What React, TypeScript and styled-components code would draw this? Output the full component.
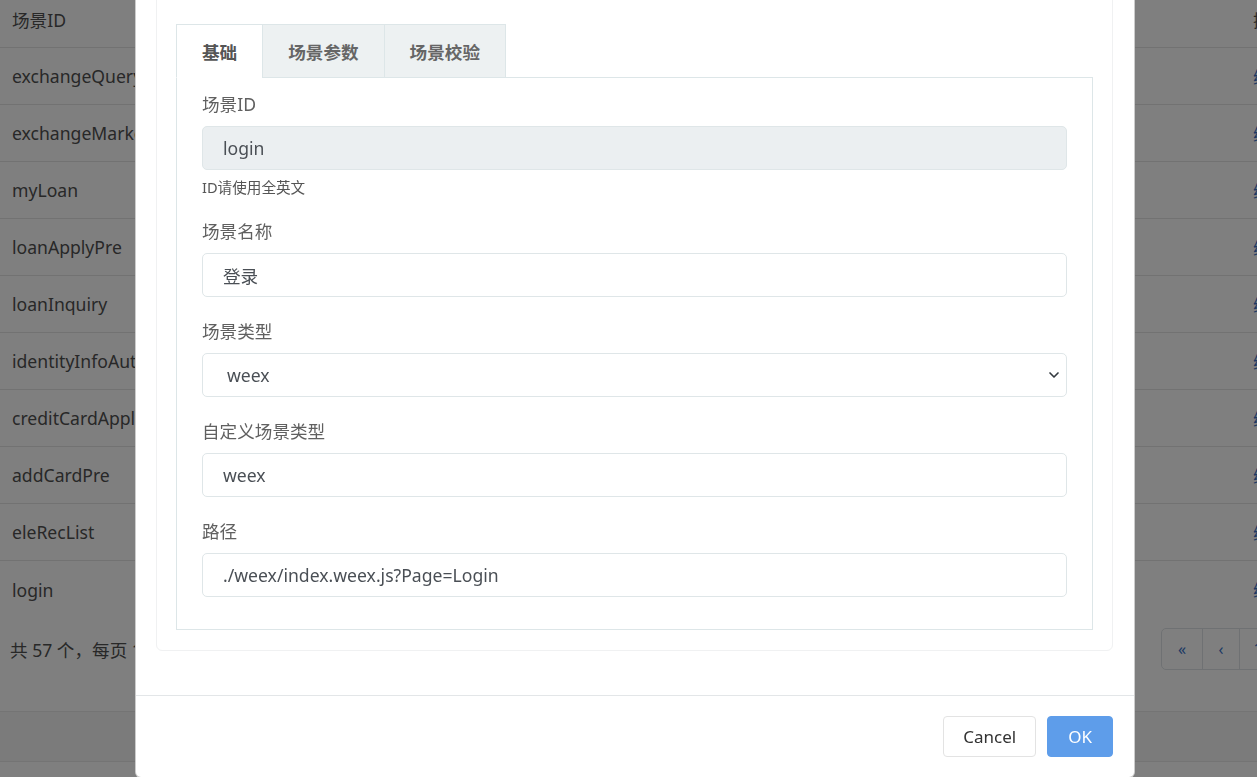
import { FC, ReactElement } from 'react'
import styled, { createGlobalStyle } from 'styled-components'
import { ChevronDown } from 'lucide-react'

const GlobalStyle = createGlobalStyle`
  html, body {
    margin: 0;
    padding: 0;
    overflow: hidden;
    background: #ffffff;
    font-family: 'Noto Sans', 'Noto Sans CJK SC', sans-serif;
    font-size: 17.6px;
  }
  * {
    box-sizing: border-box;
  }
`

const Page = styled('div')`
  position: relative;
  width: 1257px;
  height: 777px;
  overflow: hidden;
`

const Table = styled('div')`
  margin-top: -9px;
  width: 1320px;
`

const Row = styled('div')<{ $last?: boolean }>`
  display: grid;
  grid-template-columns: 1241px 1fr;
  align-items: center;
  height: 57px;
  border-bottom: ${({ $last }) => ($last ? 'none' : '1px solid #e4e4e4')};
  color: #505050;
`

const Cell = styled('div')`
  padding: 0 12px;
  white-space: nowrap;
`

const LinkCell = styled(Cell)`
  color: #3a72c8;
`

const PagerRow = styled('div')`
  display: flex;
  align-items: center;
  justify-content: space-between;
  margin-top: 10px;
  height: 42px;
  padding-left: 10px;
  color: #505050;
`

const Pager = styled('div')`
  display: flex;
  width: 96px;
  overflow: hidden;
`

const PageButton = styled('span')<{ $first?: boolean; $w: number }>`
  display: flex;
  align-items: center;
  justify-content: center;
  flex: 0 0 ${({ $w }) => $w}px;
  height: 42px;
  border: 1px solid #dee2e6;
  margin-left: ${({ $first }) => ($first ? '0' : '-1px')};
  border-radius: ${({ $first }) => ($first ? '5px 0 0 5px' : '0')};
  color: #3a72c8;
  font-size: 16px;
`

const FooterBar = styled('div')`
  margin-top: 41px;
  height: 51px;
  border-top: 1px solid #e8e8e8;
  border-bottom: 1px solid #e8e8e8;
  background: #f6f6f6;
`

const Overlay = styled('div')`
  position: fixed;
  inset: 0;
  background: rgba(0, 0, 0, 0.5);
`

const Modal = styled('div')`
  position: fixed;
  left: 135px;
  top: -38px;
  width: 1000px;
  background: #ffffff;
  border: 1px solid rgba(0, 0, 0, 0.2);
  border-radius: 6px;
`

const ModalBody = styled('div')`
  padding: 20px 21px 44px 20px;
`

const Card = styled('div')`
  border: 1px solid #f0f1f2;
  border-radius: 6px;
  padding: 40px 19px 20px 19px;
`

const TabNav = styled('div')`
  display: flex;
  align-items: flex-end;
`

const Tab = styled('div')<{ $active?: boolean }>`
  position: relative;
  z-index: 1;
  height: 54px;
  margin-bottom: -1px;
  margin-left: ${({ $active }) => ($active ? '0' : '-1px')};
  padding: 0 25px;
  display: flex;
  align-items: center;
  font-weight: 700;
  color: ${({ $active }) => ($active ? '#555555' : '#666666')};
  background: ${({ $active }) => ($active ? '#ffffff' : '#edf1f2')};
  border: 1px solid #dde6e8;
  border-bottom-color: ${({ $active }) => ($active ? '#ffffff' : '#dde6e8')};
  &:first-child {
    margin-left: 0;
  }
`

const Panel = styled('div')`
  border: 1px solid #dde6e8;
  padding: 14px 25px 32px 25px;
`

const Group = styled('div')<{ $gap: number }>`
  margin-bottom: ${({ $gap }) => $gap}px;
  &:last-child {
    margin-bottom: 0;
  }
`

const Label = styled('div')`
  height: 24px;
  line-height: 24px;
  margin-bottom: 10px;
  color: #606060;
`

const Input = styled('input')`
  display: block;
  width: 100%;
  height: 44px;
  padding: 0 20px;
  font: inherit;
  color: #4a4f55;
  background: #ffffff;
  border: 1px solid #dfe6e8;
  border-radius: 5px;
  outline: none;
  &:disabled {
    background: #ebeff1;
    color: #4a4f55;
  }
`

const SelectWrap = styled('div')`
  position: relative;
`

const Select = styled('select')`
  display: block;
  width: 100%;
  height: 44px;
  padding: 0 40px 0 24px;
  font: inherit;
  color: #4a4f55;
  background: #ffffff;
  border: 1px solid #dfe6e8;
  border-radius: 5px;
  appearance: none;
  outline: none;
`

const Arrow = styled(ChevronDown)`
  position: absolute;
  right: 5px;
  top: 14px;
  width: 16px;
  height: 16px;
  color: #343a40;
  pointer-events: none;
`

const Help = styled('div')`
  margin-top: 8px;
  height: 18px;
  line-height: 18px;
  font-size: 14.6px;
  color: #555555;
`

const ModalFooter = styled('div')`
  display: flex;
  justify-content: flex-end;
  gap: 11px;
  padding: 20px 21px 20px 20px;
  border-top: 1px solid #e3e6e8;
`

const Button = styled('button')<{ $primary?: boolean }>`
  height: 41px;
  padding: 0 ${({ $primary }) => ($primary ? '20px' : '19px')};
  font: inherit;
  font-size: 17px;
  border-radius: 4px;
  color: ${({ $primary }) => ($primary ? '#ffffff' : '#333333')};
  background: ${({ $primary }) => ($primary ? '#5e9dea' : '#ffffff')};
  border: 1px solid ${({ $primary }) => ($primary ? '#5e9dea' : '#e3e3e3')};
`

const rows = [
  'exchangeQuery',
  'exchangeMarket',
  'myLoan',
  'loanApplyPre',
  'loanInquiry',
  'identityInfoAuth',
  'creditCardApply',
  'addCardPre',
  'eleRecList',
  'login',
]

const App: FC = (): ReactElement => {
  return (
    <Page>
      <GlobalStyle />
      <Table>
        <Row>
          <Cell>场景ID</Cell>
          <Cell>操作</Cell>
        </Row>
        {rows.map((name, i) => (
          <Row key={name} $last={i === rows.length - 1}>
            <Cell>{name}</Cell>
            <LinkCell>编辑</LinkCell>
          </Row>
        ))}
      </Table>
      <PagerRow>
        <span>共 57 个，每页 10 个</span>
        <Pager>
          <PageButton $first $w={42}>«</PageButton>
          <PageButton $w={38}>‹</PageButton>
          <PageButton $w={38}>1</PageButton>
        </Pager>
      </PagerRow>
      <FooterBar />
      <Overlay />
      <Modal>
        <ModalBody>
          <Card>
            <TabNav>
              <Tab $active>基础</Tab>
              <Tab>场景参数</Tab>
              <Tab>场景校验</Tab>
            </TabNav>
            <Panel>
              <Group $gap={23}>
                <Label>场景ID</Label>
                <Input disabled defaultValue="login" />
                <Help>ID请使用全英文</Help>
              </Group>
              <Group $gap={22}>
                <Label>场景名称</Label>
                <Input defaultValue="登录" />
              </Group>
              <Group $gap={22}>
                <Label>场景类型</Label>
                <SelectWrap>
                  <Select defaultValue="weex">
                    <option value="weex">weex</option>
                    <option value="h5">h5</option>
                  </Select>
                  <Arrow strokeWidth={2.5} />
                </SelectWrap>
              </Group>
              <Group $gap={22}>
                <Label>自定义场景类型</Label>
                <Input defaultValue="weex" />
              </Group>
              <Group $gap={22}>
                <Label>路径</Label>
                <Input defaultValue="./weex/index.weex.js?Page=Login" />
              </Group>
            </Panel>
          </Card>
        </ModalBody>
        <ModalFooter>
          <Button>Cancel</Button>
          <Button $primary>OK</Button>
        </ModalFooter>
      </Modal>
    </Page>
  )
}

export default App
